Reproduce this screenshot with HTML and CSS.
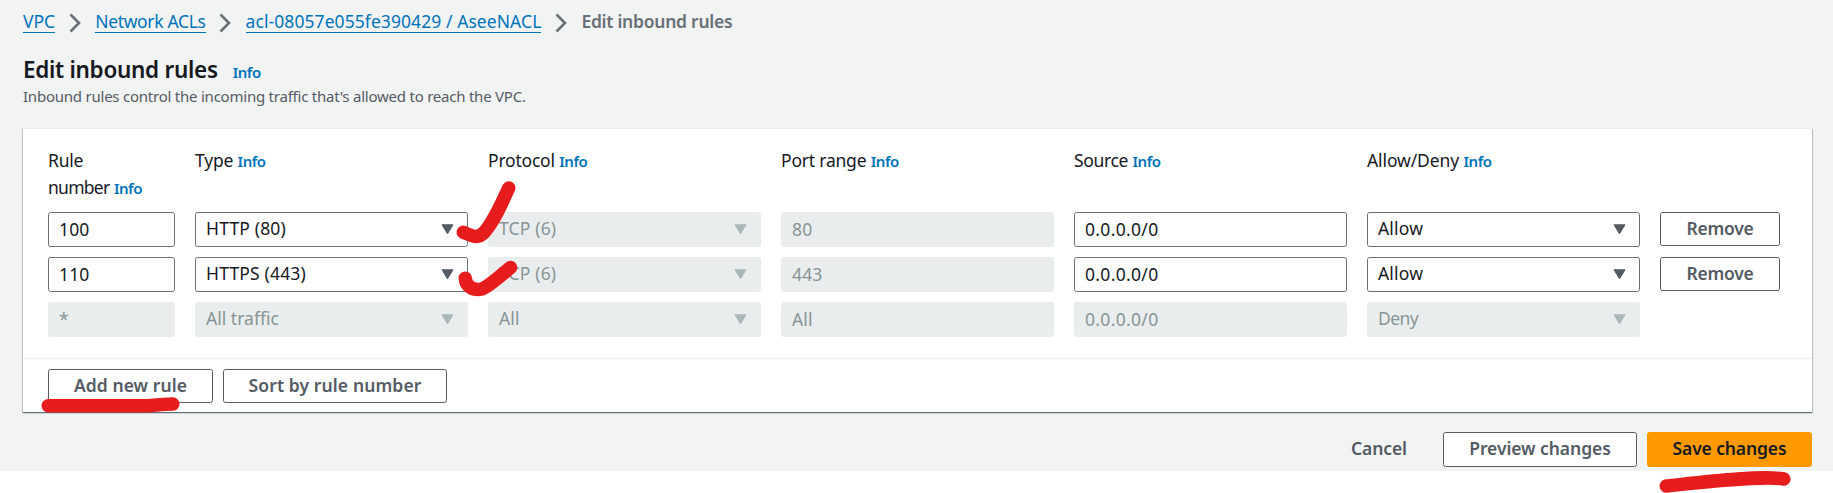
FILE: index.html
```
<!DOCTYPE html>
<html lang="en">
<head>
<meta charset="utf-8">
<title>Edit inbound rules</title>
<link rel="stylesheet" href="styles.css">
</head>
<body>
<main class="page">
  <nav class="crumbs">
    <a class="crumb">VPC</a>
    <svg class="chev" viewBox="0 0 12 20"><path d="M1.5 1.5 10 10 1.5 18.5"/></svg>
    <a class="crumb crumb-acls">Network ACLs</a>
    <svg class="chev" viewBox="0 0 12 20"><path d="M1.5 1.5 10 10 1.5 18.5"/></svg>
    <a class="crumb crumb-id">acl-08057e055fe390429 / AseeNACL</a>
    <svg class="chev" viewBox="0 0 12 20"><path d="M1.5 1.5 10 10 1.5 18.5"/></svg>
    <span class="crumb-current">Edit inbound rules</span>
  </nav>
  <header class="heading">
    <div class="title-row"><h1 class="title">Edit inbound rules</h1><a class="info">Info</a></div>
    <p class="desc">Inbound rules control the incoming traffic that's allowed to reach the VPC.</p>
  </header>
  <section class="panel">
    <div class="rules">
      <div class="label">Rule<br><span class="tight">number</span><a class="info">Info</a></div>
      <div class="label">Type<a class="info">Info</a></div>
      <div class="label">Protocol<a class="info">Info</a></div>
      <div class="label">Port range<a class="info">Info</a></div>
      <div class="label label-source">Source<a class="info">Info</a></div>
      <div class="label label-allow">Allow/Deny<a class="info">Info</a></div>
      <div></div>

      <div class="field input">100</div>
      <div class="field select">HTTP (80)<svg class="caret" viewBox="0 0 13 11"><path d="M1 .8h11L6.500 9.800z"/></svg></div>
      <div class="field select off">TCP (6)<svg class="caret" viewBox="0 0 13 11"><path d="M1 .8h11L6.500 9.800z"/></svg></div>
      <div class="field input off">80</div>
      <div class="field input cidr">0.0.0.0/0</div>
      <div class="field select">Allow<svg class="caret" viewBox="0 0 13 11"><path d="M1 .8h11L6.500 9.800z"/></svg></div>
      <button class="btn btn-remove">Remove</button>

      <div class="field input">110</div>
      <div class="field select">HTTPS (443)<svg class="caret" viewBox="0 0 13 11"><path d="M1 .8h11L6.500 9.800z"/></svg></div>
      <div class="field select off">TCP (6)<svg class="caret" viewBox="0 0 13 11"><path d="M1 .8h11L6.500 9.800z"/></svg></div>
      <div class="field input off">443</div>
      <div class="field input cidr">0.0.0.0/0</div>
      <div class="field select">Allow<svg class="caret" viewBox="0 0 13 11"><path d="M1 .8h11L6.500 9.800z"/></svg></div>
      <button class="btn btn-remove">Remove</button>

      <div class="field input off">*</div>
      <div class="field select off plain">All traffic<svg class="caret" viewBox="0 0 13 11"><path d="M1 .8h11L6.500 9.800z"/></svg></div>
      <div class="field select off">All<svg class="caret" viewBox="0 0 13 11"><path d="M1 .8h11L6.500 9.800z"/></svg></div>
      <div class="field input off">All</div>
      <div class="field input off cidr">0.0.0.0/0</div>
      <div class="field select off deny">Deny<svg class="caret" viewBox="0 0 13 11"><path d="M1 .8h11L6.500 9.800z"/></svg></div>
    </div>
    <div class="panel-actions">
      <button class="btn btn-add">Add new rule</button>
      <button class="btn btn-sort">Sort by rule number</button>
    </div>
  </section>
  <footer class="actions">
    <button class="btn btn-link">Cancel</button>
    <button class="btn btn-preview">Preview changes</button>
    <button class="btn btn-primary">Save changes</button>
  </footer>
</main>
<svg class="marks" viewBox="0 0 1833 493">
  <path d="M463.300 232.300C472 236 478 239.500 484.500 232 C494 221 501 205 508.700 188"/>
  <path d="M465.300 278.200C465.500 286 473 291 482 289 C490 286 500 276 510.500 267.500"/>
  <path d="M48.200 405.800H145C153 405.300 163 404.200 172.800 404"/>
  <path d="M1666.300 486C1700 482.500 1762 475 1783.800 479"/>
</svg>
</body>
</html>
```
FILE: styles.css
```
* { box-sizing: border-box; }
body {
  margin: 0;
  background: #fff;
  color: #16191f;
  font: 400 17.5px/27px "Noto Sans", "Open Sans", sans-serif;
}
.page {
  display: flex;
  flex-direction: column;
  height: 471px;
  padding: 8px 21px 0 23px;
  background: #f2f3f3;
}
.crumbs { display: flex; align-items: flex-start; height: 28px; }
.crumb {
  height: 25px;
  line-height: 26px;
  color: #0073bb;
  border-bottom: 1px solid #0073bb;
  white-space: nowrap;
}
.crumb-acls { letter-spacing: -.33px; }
.crumb-id { letter-spacing: .07px; }
.chev { width: 12px; height: 20px; margin: 5px 14.500px 0 13.500px; fill: none; stroke: #687078; stroke-width: 2.600; }
.crumb-current { font-weight: 600; color: #687078; letter-spacing: -.26px; line-height: 26px; }

.heading { height: 92px; padding-top: 19px; }
.title-row { display: flex; align-items: baseline; height: 31px; }
.title { margin: 0 15px 0 0; font-size: 22.500px; line-height: 30px; font-weight: 600; letter-spacing: -.3px; }
.info { color: #0073bb; font-size: 15px; font-weight: 600; letter-spacing: -.49px; }
.desc { margin: 0; color: #545b64; font-size: 15px; line-height: 20px; letter-spacing: -.23px; }

.panel {
  height: 284px;
  background: #fff;
  border-top: 1px solid #eaeded;
  box-shadow: 0 1px 1px 0 #5f6f73, 1px 1px 1px 0 rgba(0, 28, 36, .15), -1px 1px 1px 0 rgba(0, 28, 36, .12);
}
.rules {
  display: grid;
  grid-template-columns: 127px repeat(5, 273px) 120px;
  grid-template-rows: 55px repeat(3, 35px);
  column-gap: 20px;
  row-gap: 10px;
  height: 229px;
  padding: 18px 25px 0;
}
.label { letter-spacing: -.21px; }
.label-source { letter-spacing: -.36px; }
.label-allow { letter-spacing: -.11px; }
.tight { letter-spacing: -.73px; }
.label .info { margin-left: 4.500px; }
.field {
  display: flex;
  justify-content: space-between;
  height: 35px;
  padding: 0 14px 0 10px;
  border: 1px solid #687078;
  border-radius: 2.500px;
  letter-spacing: .17px;
  line-height: 31px;
}
.input { line-height: 33px; }
.cidr { letter-spacing: .32px; }
.plain { letter-spacing: .02px; }
.off { background: #eaeded; border-color: #eaeded; color: #879596; }
.deny { letter-spacing: -.6px; }
.caret { width: 13px; height: 11px; margin-top: 11px; fill: #545b64; stroke: #545b64; stroke-width: 1; stroke-linejoin: round; }
.select .caret { margin-right: -1px; }
.off .caret { fill: #aab7b8; stroke: #aab7b8; }

.btn {
  height: 34px;
  padding: 0 0 3px;
  border: 1px solid #545b64;
  border-radius: 2.500px;
  background: #fff;
  color: #545b64;
  font: 600 17.5px/28px "Noto Sans", "Open Sans", sans-serif;
}
.btn-remove { letter-spacing: -.26px; }
.panel-actions { display: flex; gap: 10px; border-top: 1px solid #eaeded; padding: 10px 25px 0; }
.btn-add { width: 165px; letter-spacing: .06px; }
.btn-sort { width: 224px; letter-spacing: .11px; }

.actions { display: flex; justify-content: flex-end; gap: 10px; padding-top: 20px; }
.actions .btn { height: 35px; }
.actions .btn-link { width: 108px; border-color: transparent; background: transparent; letter-spacing: -.09px; }
.btn-preview { width: 194px; letter-spacing: -.07px; }
.actions .btn-primary { width: 165px; border-color: #ff9900; background: #ff9900; color: #16191f; letter-spacing: -.12px; }

.marks {
  position: absolute;
  inset: 0;
  width: 1833px;
  height: 493px;
  fill: none;
  stroke: #e71d1d;
  stroke-width: 13.500;
  stroke-linecap: round;
  stroke-linejoin: round;
  pointer-events: none;
}
```
